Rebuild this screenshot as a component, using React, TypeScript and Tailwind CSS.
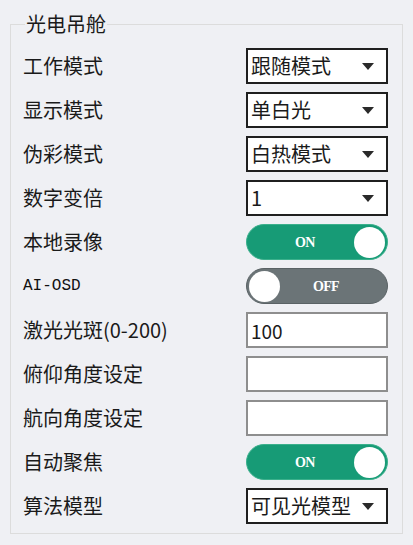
import React from "react";

const cjk = "font-['Noto_Sans_CJK_SC','Noto_Sans',sans-serif]";

function Combo({ value }: { value: string }) {
  return (
    <div className="w-[142px] h-[36px] border-2 border-[#1f1f1f] bg-white flex items-center justify-between pl-[3px] pr-[12px]">
      <span className="text-[20px] leading-none text-[#1a1a1a]">{value}</span>
      <svg width="12" height="7" viewBox="0 0 12 7">
        <path d="M0 0 L12 0 L6 7 Z" fill="#2a2a2a" />
      </svg>
    </div>
  );
}

function Field({ value }: { value?: string }) {
  return (
    <div className="w-[142px] h-[36px] border-2 border-[#8e8e8e] bg-white flex items-center pl-[3px]">
      <span className="text-[19px] leading-none text-[#1a1a1a]">{value}</span>
    </div>
  );
}

function Toggle({ on }: { on: boolean }) {
  if (on) {
    return (
      <div className="w-[142px] h-[36px] rounded-full bg-[#179b76] border border-[#3bb08c] flex items-center pr-[2px]">
        <span className="ml-[48px] flex-1 text-white text-[14px] font-bold font-['Liberation_Serif',serif] tracking-tighter">ON</span>
        <div className="w-[31px] h-[31px] rounded-full bg-white" />
      </div>
    );
  }
  return (
    <div className="w-[142px] h-[36px] rounded-full bg-[#6b7477] border border-[#5a6265] flex items-center pl-[2px]">
      <div className="w-[31px] h-[31px] rounded-full bg-white" />
      <span className="ml-[33px] text-white text-[14px] font-bold font-['Liberation_Serif',serif] tracking-tighter">OFF</span>
    </div>
  );
}

function Row({ label, children, mono }: { label: string; children: React.ReactNode; mono?: boolean }) {
  return (
    <div className="h-[36px] flex items-center justify-between">
      {mono ? (
        <span className="text-[16px] text-[#111] font-['Liberation_Mono',monospace]">{label}</span>
      ) : (
        <span className="text-[20px] text-[#1a1a1a]">{label}</span>
      )}
      {children}
    </div>
  );
}

export default function App() {
  return (
    <div className={`w-[413px] h-[545px] bg-[#eff0f4] pt-[10px] px-[10px] ${cjk}`}>
      <fieldset className="border border-[#dcdcdc] pl-[12px] pr-[14px] pt-[10px] pb-[9px]">
        <legend className="ml-[2px] px-[1px] text-[20px] leading-[28px] text-[#1a1a1a]">光电吊舱</legend>
        <div className="flex flex-col gap-[8px]">
          <Row label="工作模式"><Combo value="跟随模式" /></Row>
          <Row label="显示模式"><Combo value="单白光" /></Row>
          <Row label="伪彩模式"><Combo value="白热模式" /></Row>
          <Row label="数字变倍"><Combo value="1" /></Row>
          <Row label="本地录像"><Toggle on /></Row>
          <Row label="AI-OSD" mono><Toggle on={false} /></Row>
          <Row label="激光光斑(0-200)"><Field value="100" /></Row>
          <Row label="俯仰角度设定"><Field /></Row>
          <Row label="航向角度设定"><Field /></Row>
          <Row label="自动聚焦"><Toggle on /></Row>
          <Row label="算法模型"><Combo value="可见光模型" /></Row>
        </div>
      </fieldset>
    </div>
  );
}
